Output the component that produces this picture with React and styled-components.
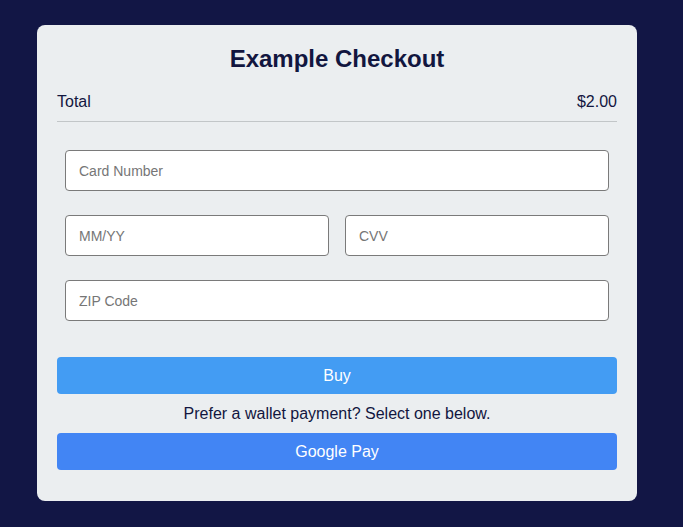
import React from 'react'
import styled, { createGlobalStyle } from 'styled-components'

const GlobalStyle = createGlobalStyle`
    html, body {
        margin: 0;
        padding: 0;
        background: #121645;
        font-family: "Liberation Sans", Arial, sans-serif;
    }
    * {
        box-sizing: border-box;
    }
`

const App = () => {
    return (
        <Page>
            <GlobalStyle />
            <Card>
                <Title>Example Checkout</Title>
                <TotalRow>
                    <span>Total</span>
                    <span>$2.00</span>
                </TotalRow>
                <Form>
                    <Field placeholder="Card Number" />
                    <Row>
                        <Field placeholder="MM/YY" />
                        <Field placeholder="CVV" />
                    </Row>
                    <Field placeholder="ZIP Code" />
                </Form>
                <PayButton>Buy</PayButton>
                <Note>Prefer a wallet payment? Select one below.</Note>
                <PayButton $google>Google Pay</PayButton>
            </Card>
        </Page>
    )
}

const Page = styled.div`
    min-height: 527px;
    padding: 25px 9px 0 0;
    display: flex;
    justify-content: center;
    align-items: flex-start;
`

const Card = styled.div`
    width: 600px;
    background: #ebeef0;
    border-radius: 8px;
    padding: 20px 20px 31px;
    color: #12163f;
    display: flex;
    flex-direction: column;
`

const Title = styled.h2`
    margin: 0;
    font-size: 24px;
    line-height: 28px;
    text-align: center;
    font-weight: 700;
`

const TotalRow = styled.div`
    display: flex;
    justify-content: space-between;
    font-size: 16px;
    line-height: 18px;
    margin-top: 20px;
    padding-bottom: 10px;
    border-bottom: 1px solid #c2c6c8;
`

const Form = styled.div`
    display: flex;
    flex-direction: column;
    gap: 24px;
    padding: 28px 8px 36px;
`

const Row = styled.div`
    display: grid;
    grid-template-columns: 1fr 1fr;
    gap: 16px;
`

const Field = styled.input`
    width: 100%;
    height: 41px;
    border: 1px solid #7a7a7a;
    border-radius: 4px;
    background: #fff;
    padding: 0 13px;
    font-family: "Liberation Sans", Arial, sans-serif;
    font-size: 14px;
    color: #333;
    outline: none;
    &::placeholder {
        color: #767676;
    }
`

const PayButton = styled.button`
    width: 100%;
    height: 37px;
    border: none;
    border-radius: 4px;
    background: ${p => p.$google ? '#4285f4' : '#439cf3'};
    color: #fff;
    font-family: "Liberation Sans", Arial, sans-serif;
    font-size: 16px;
    cursor: pointer;
`

const Note = styled.p`
    margin: 0;
    padding: 10px 0;
    font-size: 16px;
    line-height: 19px;
    text-align: center;
`

export default App
